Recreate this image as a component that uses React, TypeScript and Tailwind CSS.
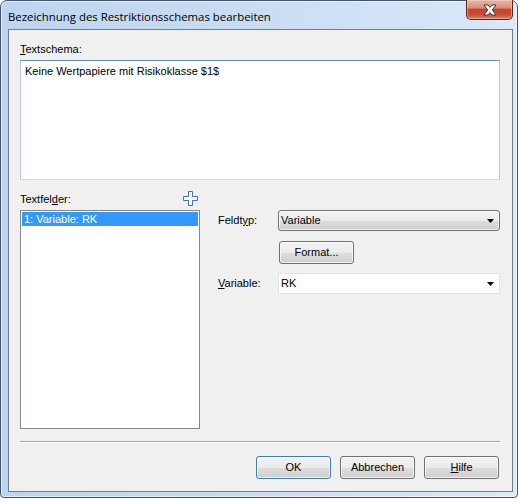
import React from "react";

const btn =
  "h-[23px] w-[75px] rounded-[3px] border flex items-center justify-center bg-[linear-gradient(to_bottom,#f2f2f2_0%,#ebebeb_50%,#dddddd_51%,#cfcfcf_100%)] shadow-[inset_0_0_0_1px_rgba(255,255,255,0.7)]";

const Arrow = () => (
  <svg width="7" height="4" viewBox="0 0 7 4" className="mr-[5px]">
    <path d="M0 0H7L3.5 4Z" fill="#000" />
  </svg>
);

const CloseButton = () => (
  <div className="-mt-px mr-[4px] h-[20px] w-[47px] rounded-b-[5px] border border-t-0 border-[#5a2519] bg-[linear-gradient(to_bottom,#ebb6a9_0%,#dc8a77_42%,#c5452d_50%,#c84b33_75%,#db8068_100%)] shadow-[inset_0_0_0_1px_rgba(255,220,210,0.45)] flex items-center justify-center">
    <svg width="14" height="12" viewBox="0 0 14 12">
      <path
        d="M1 1H5L7 3.4L9 1H13L9.3 6L13 11H9L7 8.6L5 11H1L4.7 6Z"
        fill="#fff"
        stroke="#3a3a3a"
        strokeWidth="1"
        strokeLinejoin="round"
      />
    </svg>
  </div>
);

export default function App() {
  return (
    <div className="w-[520px] h-[499px] bg-white font-['Liberation_Sans',Arial,sans-serif] text-[11px] leading-[15px] text-black">
      <div className="w-[518px] h-[498px] rounded-t-[7px] rounded-b-[4px] border border-[#44546a] bg-[linear-gradient(to_right,#bdd5ef_0%,#c9ddf3_50%,#dbe9f8_100%)] shadow-[inset_0_0_0_1px_rgba(255,255,255,0.55)] flex flex-col">
        {/* title bar */}
        <div className="h-[28px] flex items-start justify-between">
          <div className="pl-[7px] pt-[8px] font-['Open_Sans',sans-serif] text-[11.4px]">
            Bezeichnung des Restriktionsschemas bearbeiten
          </div>
          <CloseButton />
        </div>

        {/* client area */}
        <div className="ml-[7px] w-[505px] h-[463px] border border-[#6f7d8e] bg-[#f0f0f0] flex flex-col pl-[11px] pr-[12px] pt-[12px]">
          <div className="h-[15px]">
            <u>T</u>extschema:
          </div>
          <div className="mt-[3px] h-[120px] bg-white border border-[#b3cbe3] border-t-[#6a8cb0] border-b-[#c6dbef] pl-[4px] pt-[3px]">
            Keine Wertpapiere mit Risikoklasse $1$
          </div>

          <div className="grid grid-cols-[180px_1fr]">
            <div className="h-[30px] flex items-end justify-between pb-[3px]">
              <span>
                Textfel<u>d</u>er:
              </span>
              <svg width="15" height="15" viewBox="0 0 15 15" className="mr-[2px] mb-[1px]">
                <path
                  d="M5.5 .5H9.5V5.5H14.5V9.5H9.5V14.5H5.5V9.5H.5V5.5H5.5Z"
                  fill="#f7f9fc"
                  stroke="#3b6fcb"
                />
              </svg>
            </div>
            <div />

            <div className="h-[219px] border border-[#828790] bg-white p-px">
              <div className="h-[14px] leading-[14px] bg-[#3399ff] text-white pl-[2px]">
                1: Variable: RK
              </div>
            </div>

            <div className="pl-[18px] flex flex-col">
              <div className="flex items-center">
                <span className="w-[60px]">
                  Feldt<u>y</u>p:
                </span>
                <div className="h-[21px] w-[222px] rounded-[3px] border border-[#707070] bg-[linear-gradient(to_bottom,#f2f2f2_0%,#ebebeb_50%,#dddddd_51%,#cfcfcf_100%)] shadow-[inset_0_0_0_1px_rgba(255,255,255,0.7)] flex items-center justify-between pl-[2px]">
                  <span>Variable</span>
                  <Arrow />
                </div>
              </div>
              <div className="mt-[10px] ml-[61px] flex">
                <div className={`${btn} h-[22px] border-[#707070]`}>Format...</div>
              </div>
              <div className="mt-[9px] flex items-center">
                <span className="w-[60px]">
                  <u>V</u>ariable:
                </span>
                <div className="h-[21px] w-[222px] border border-[#e3e3e3] bg-white flex items-center justify-between pl-[2px]">
                  <span>RK</span>
                  <Arrow />
                </div>
              </div>
            </div>
          </div>

          <div className="mt-[12px] h-px bg-[#a0a0a0]" />
          <div className="h-px bg-white" />

          <div className="mt-[13px] flex justify-end gap-[9px] pr-px">
            <div className={`${btn} border-[#3c7fb1] shadow-[inset_0_0_0_1px_#8fd8f7]`}>OK</div>
            <div className={`${btn} border-[#707070]`}>Abbrechen</div>
            <div className={`${btn} border-[#707070]`}>
              <span>
                <u>H</u>ilfe
              </span>
            </div>
          </div>
        </div>
      </div>
    </div>
  );
}
